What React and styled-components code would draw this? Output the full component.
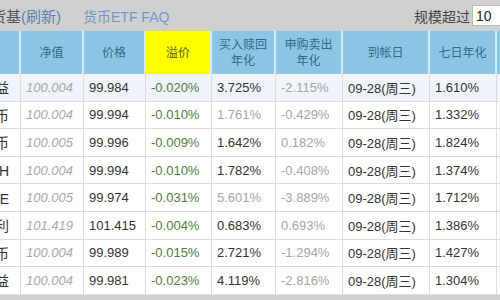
import styled, { createGlobalStyle } from "styled-components";

const GlobalStyle = createGlobalStyle`
  html, body {
    margin: 0;
    padding: 0;
    background: #d0d0d0;
    overflow: hidden;
  }
  body {
    font-family: "Liberation Sans", "Noto Sans CJK SC", sans-serif;
  }
`;

const COLS = "21px 63px 62px 66px 64px 67px 87px 67px 80px";

const rows = [
  ["华宝添益", "100.004", "99.984", "-0.020%", "3.725%", "-2.115%", "09-28(周三)", "1.610%", true],
  ["银华货币", "100.004", "99.994", "-0.010%", "1.761%", "-0.429%", "09-28(周三)", "1.332%", false],
  ["建信货币", "100.005", "99.996", "-0.009%", "1.642%", "0.182%", "09-28(周三)", "1.824%", true],
  ["货币ETF H", "100.004", "99.994", "-0.010%", "1.782%", "-0.408%", "09-28(周三)", "1.374%", true],
  ["理财金E", "100.005", "99.974", "-0.031%", "5.601%", "-3.889%", "09-28(周三)", "1.712%", false],
  ["银华日利", "101.419", "101.415", "-0.004%", "0.683%", "0.693%", "09-28(周三)", "1.386%", true],
  ["添富货币", "100.004", "99.989", "-0.015%", "2.721%", "-1.294%", "09-28(周三)", "1.427%", true],
  ["招商添益", "100.004", "99.981", "-0.023%", "4.119%", "-2.816%", "09-28(周三)", "1.304%", true],
];

export default function App() {
  return (
    <>
      <GlobalStyle />
      <Page>
        <TopBar>
          <LeftLinks>
            <Title>
              货基<Refresh>(刷新)</Refresh>
            </Title>
            <Link>货币ETF FAQ</Link>
          </LeftLinks>
          <Filter>
            规模超过
            <SizeInput>10</SizeInput>
          </Filter>
        </TopBar>
        <Table>
          <HeadRow>
            <HeadCell />
            <HeadCell>净值</HeadCell>
            <HeadCell>价格</HeadCell>
            <HeadCell $highlight>溢价</HeadCell>
            <HeadCell>
              买入赎回
              <br />
              年化
            </HeadCell>
            <HeadCell>
              申购卖出
              <br />
              年化
            </HeadCell>
            <HeadCell>到帐日</HeadCell>
            <HeadCell>七日年化</HeadCell>
            <HeadCell />
          </HeadRow>
          {rows.map((r, i) => (
            <Row key={i} $tint={i === 0}>
              <NameCell>{r[0]}</NameCell>
              <NavCell>{r[1]}</NavCell>
              <Cell>{r[2]}</Cell>
              <Cell $tone="green">{r[3]}</Cell>
              <Cell $tone={r[8] ? "dark" : "gray"}>{r[4]}</Cell>
              <Cell $tone="gray">{r[5]}</Cell>
              <Cell>{r[6]}</Cell>
              <Cell>{r[7]}</Cell>
              <Cell />
            </Row>
          ))}
        </Table>
      </Page>
    </>
  );
}

const Page = styled.div`
  width: 540px;
  height: 300px;
  background: #d0d0d0;
  overflow: hidden;
`;

const TopBar = styled.div`
  height: 31px;
  display: flex;
  align-items: center;
  justify-content: space-between;
  width: 500px;
  font-size: 14px;
`;

const LeftLinks = styled.div`
  display: flex;
  align-items: center;
  gap: 22px;
  margin-left: -9px;
`;

const Title = styled.span`
  color: #555;
  font-size: 15px;
`;

const Refresh = styled.span`
  color: #5a82b4;
`;

const Link = styled.span`
  color: #7096c4;
`;

const Filter = styled.div`
  display: flex;
  align-items: center;
  color: #444;
`;

const SizeInput = styled.div`
  width: 28px;
  height: 21px;
  margin-left: 2px;
  background: #fff;
  color: #222;
  line-height: 21px;
  padding-left: 3px;
  box-sizing: border-box;
  border: 1px solid #bbb;
  border-right: none;
`;

const Table = styled.div`
  display: flex;
  flex-direction: column;
  background: #fff;
`;

const HeadRow = styled.div`
  display: grid;
  grid-template-columns: ${COLS};
  height: 43px;
`;

const HeadCell = styled.div`
  display: flex;
  align-items: center;
  justify-content: center;
  text-align: center;
  font-size: 12px;
  line-height: 16px;
  border-right: 2px solid #d6eaf5;
  color: ${(p) => (p.$highlight ? "#5a5a1e" : "#2c6a8e")};
  background: ${(p) => (p.$highlight ? "#ffff00" : "#8cc6e4")};
`;

const Row = styled.div`
  display: grid;
  grid-template-columns: ${COLS};
  height: 27.6px;
  box-sizing: border-box;
  border-bottom: 1px solid #dcdcdc;
  background: ${(p) => (p.$tint ? "#eef4fa" : "#fff")};
`;

const Cell = styled.div`
  display: flex;
  align-items: center;
  padding-left: 5px;
  font-size: 13px;
  white-space: nowrap;
  overflow: hidden;
  border-right: 1px solid #dcdcdc;
  color: ${(p) =>
    p.$tone === "green" ? "#4f7d3e" : p.$tone === "gray" ? "#a5a5a5" : "#333"};
`;

const NavCell = styled(Cell)`
  font-style: italic;
  color: #a8a8a8;
`;

const NameCell = styled(Cell)`
  padding-left: 0;
  padding-right: 11px;
  justify-content: flex-end;
  font-size: 14px;
  color: #333;
`;
